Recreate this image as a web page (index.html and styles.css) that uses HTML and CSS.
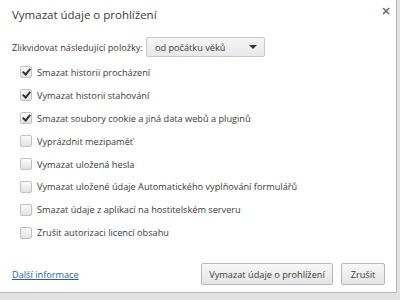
FILE: index.html
```html
<!DOCTYPE html>
<html lang="cs">
<head>
<meta charset="utf-8">
<link rel="stylesheet" href="styles.css">
</head>
<body>
<div class="dialog">
  <div class="header">
    <div class="title">Vymazat údaje o prohlížení</div>
    <div class="close">×</div>
  </div>
  <div class="period">
    <span class="period-label">Zlikvidovat následující položky:</span>
    <div class="select"><span>od počátku věků</span><span class="arrow"></span></div>
  </div>
  <div class="list">
    <div class="row"><span class="cb checked"></span><span>Smazat historii procházení</span></div>
    <div class="row"><span class="cb checked"></span><span>Vymazat historii stahování</span></div>
    <div class="row"><span class="cb checked"></span><span>Smazat soubory cookie a jiná data webů a pluginů</span></div>
    <div class="row"><span class="cb"></span><span>Vyprázdnit mezipaměť</span></div>
    <div class="row"><span class="cb"></span><span>Vymazat uložená hesla</span></div>
    <div class="row"><span class="cb"></span><span>Vymazat uložené údaje Automatického vyplňování formulářů</span></div>
    <div class="row"><span class="cb"></span><span>Smazat údaje z aplikací na hostitelském serveru</span></div>
    <div class="row"><span class="cb"></span><span>Zrušit autorizaci licencí obsahu</span></div>
  </div>
  <div class="footer">
    <a class="link" href="#">Další informace</a>
    <div class="buttons">
      <button class="btn btn-main">Vymazat údaje o prohlížení</button>
      <button class="btn btn-cancel">Zrušit</button>
    </div>
  </div>
</div>
</body>
</html>
```
FILE: styles.css
```css
html, body {
  margin: 0;
  padding: 0;
  width: 400px;
  height: 300px;
  overflow: hidden;
  background: #e2e2e2;
}
body {
  font-family: "Open Sans", "DejaVu Sans", sans-serif;
  font-size: 9.2px;
  color: #3a3a3a;
}
.dialog {
  width: 397px;
  height: 293px;
  box-sizing: border-box;
  background: #fff;
  border-right: 1px solid #b8b8b8;
  border-bottom: 1px solid #b8b8b8;
  display: flex;
  flex-direction: column;
  padding: 0 11px 0 12px;
}
.header {
  display: flex;
  justify-content: space-between;
  align-items: flex-start;
  height: 32px;
  padding-top: 6px;
  box-sizing: border-box;
}
.title {
  font-size: 11.5px;
  color: #3a3a3a;
  line-height: 18px;
}
.close {
  font-family: "DejaVu Sans", sans-serif;
  font-size: 12px;
  font-weight: bold;
  color: #6a6a6a;
  line-height: 12px;
  margin-top: -1px;
  margin-right: -6px;
}
.period {
  display: flex;
  align-items: center;
  height: 20px;
  margin-top: 5px;
}
.period-label {
  margin-right: 3px;
}
.select {
  width: 119px;
  height: 20px;
  box-sizing: border-box;
  border: 1px solid #c8c8c8;
  border-radius: 2px;
  background: linear-gradient(#f6f6f6, #e8e8e8);
  display: flex;
  align-items: center;
  justify-content: space-between;
  padding: 0 7px 0 8px;
  color: #3a3a3a;
}
.arrow {
  width: 0;
  height: 0;
  border-left: 4px solid transparent;
  border-right: 4px solid transparent;
  border-top: 4px solid #333;
}
.list {
  display: flex;
  flex-direction: column;
  margin-top: 4px;
  padding-left: 8px;
}
.row {
  display: flex;
  align-items: center;
  height: 22.9px;
}
.cb {
  width: 10px;
  height: 10px;
  border: 1px solid #c2c2c2;
  border-radius: 2px;
  background: linear-gradient(#fbfbfb, #e2e2e2);
  margin-right: 5px;
  position: relative;
  flex: none;
}
.cb.checked::after {
  content: "";
  position: absolute;
  left: 3px;
  top: 0px;
  width: 3px;
  height: 6px;
  border-right: 2px solid #333;
  border-bottom: 2px solid #333;
  transform: rotate(40deg);
}
.footer {
  margin-top: auto;
  margin-bottom: 7px;
  display: flex;
  align-items: center;
  justify-content: space-between;
}
.link {
  color: #2a5db0;
  text-decoration: underline;
}
.buttons {
  display: flex;
  gap: 8px;
}
.btn {
  font-family: inherit;
  font-size: 9.2px;
  color: #3a3a3a;
  height: 22px;
  border: 1px solid #b8b8b8;
  border-radius: 2px;
  background: linear-gradient(#f8f8f8, #e4e4e4);
}
.btn-main {
  width: 132px;
  padding: 0;
}
.btn-cancel {
  width: 44px;
  padding: 0;
}
```
